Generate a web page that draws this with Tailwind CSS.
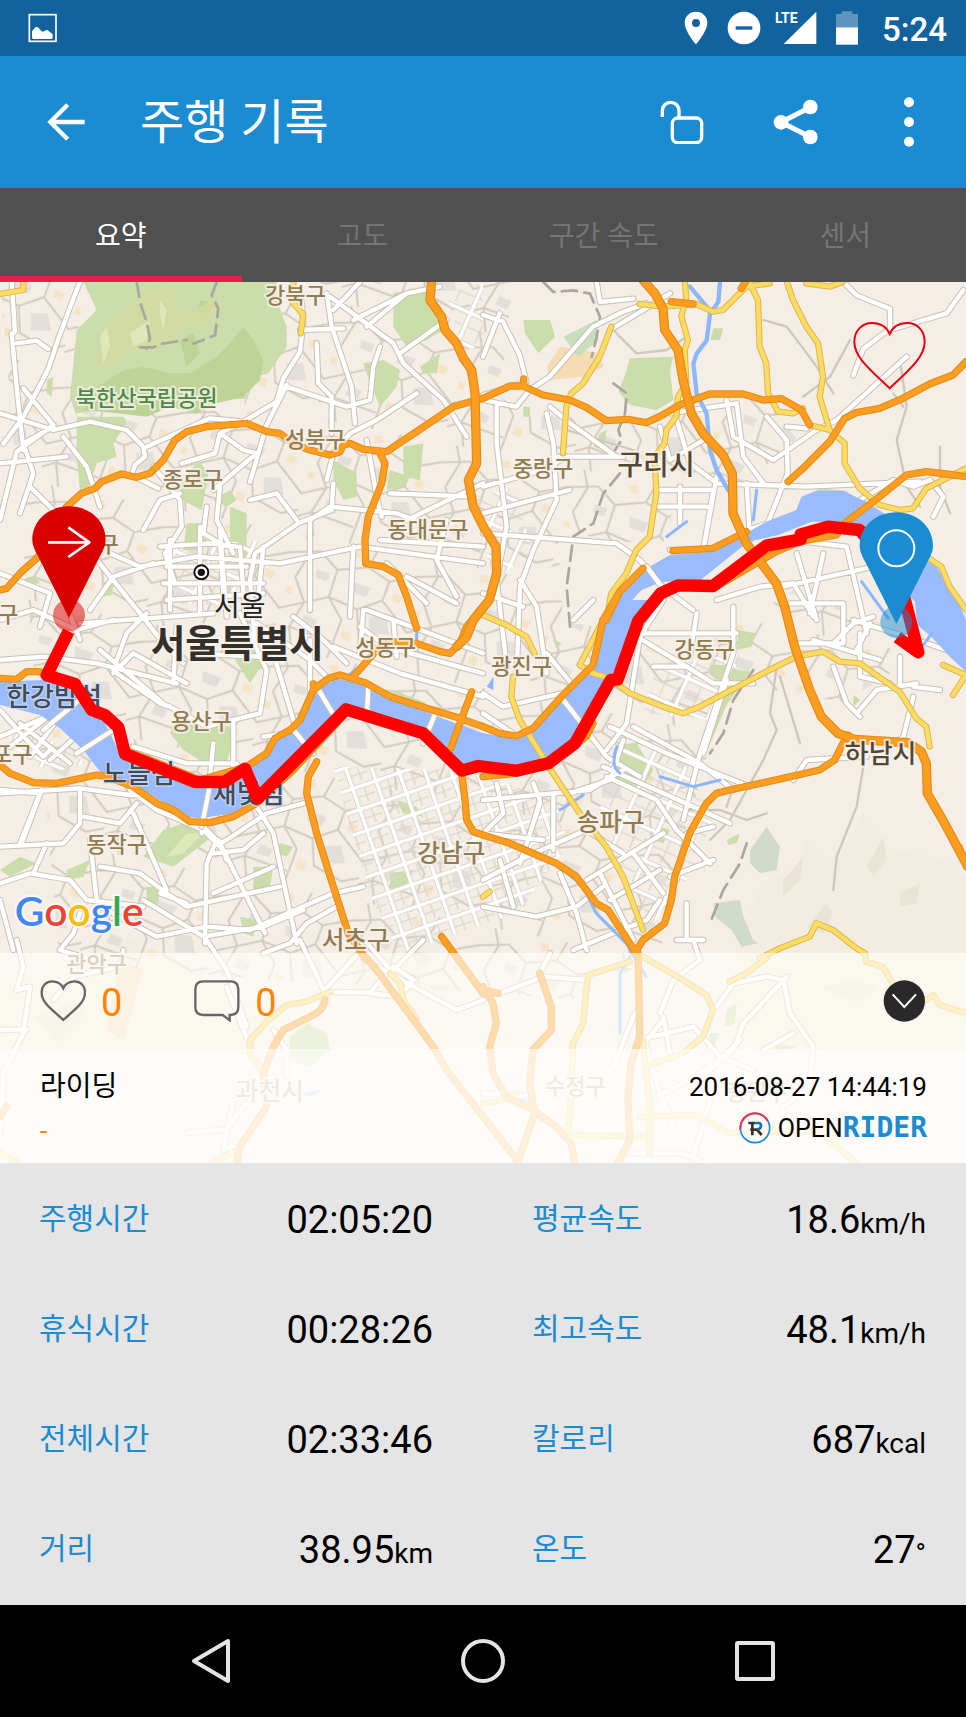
<!DOCTYPE html>
<html lang="ko">
<head>
<meta charset="utf-8">
<meta name="viewport" content="width=device-width, initial-scale=1">
<title>주행 기록</title>
<script src="https://cdn.jsdelivr.net/npm/@tailwindcss/browser@4"></script>
</head>
<body class="min-h-screen flex flex-col bg-black font-['Roboto','Noto_Sans_CJK_KR',sans-serif]">

<!-- Status bar -->
<div class="h-14 bg-[#12629d] flex items-center justify-between pl-7 pr-[19px] text-white">
  <svg class="w-[30px] h-[30px]" viewBox="0 0 90 90" fill="none" aria-hidden="true"><rect x="4" y="5" width="80" height="80" stroke="#fff" stroke-width="5"/><path d="M12 74V55l10-12q5-3 9 1l10 11q4 2 8-1 8-6 14 1l11 9v10q-1 4-5 4H17q-4 0-5-4z" fill="#fff"/></svg>
  <div class="flex items-center">
    <svg class="w-[24px] h-[34px] mr-[19px]" viewBox="0 0 72 102" aria-hidden="true"><path fill="#fff" fill-rule="evenodd" d="M36 2C17 2 2 16 2 35c0 26 34 65 34 65s34-39 34-65C70 16 55 2 36 2zm0 46a12 12 0 110-24 12 12 0 010 24z"/></svg>
    <svg class="w-[34px] h-[34px] mr-[14px]" viewBox="0 0 102 102" aria-hidden="true"><circle cx="51" cy="51" r="49" fill="#fff"/><path d="M26 51h50" stroke="#12629d" stroke-width="10"/></svg>
    <div class="relative w-[42px] h-[34px] mr-[19px]">
      <svg class="w-full h-full" viewBox="0 0 126 102" aria-hidden="true"><path d="M124 2v97H26z" fill="#fff"/></svg>
      <span class="absolute left-0 top-0 text-[14px] leading-none font-bold">LTE</span>
    </div>
    <svg class="w-[22px] h-[34px] mr-[24px]" viewBox="0 0 66 102" aria-hidden="true"><path d="M0 9h17V1h32v8h17v40H0z" fill="#5f94be"/><path d="M0 49h66v52H0z" fill="#fff"/></svg>
    <time class="text-[33px] leading-none font-medium pt-0.5">5:24</time>
  </div>
</div>

<!-- App bar -->
<header class="h-[132px] bg-[#1b8bd2] text-white flex items-center pl-[47px] pr-[47px]">
  <button aria-label="뒤로" class="shrink-0"><svg class="w-[38px] h-[38px]" viewBox="0 0 114 114" fill="none" stroke="#fff" stroke-width="13"><path d="M113 57H12M62 5L10 57l52 52"/></svg></button>
  <h1 class="ml-[55px] pt-0.5 text-[48px] leading-none">주행 기록</h1>
  <div class="ml-auto flex items-center">
    <button aria-label="잠금 해제"><svg class="w-[44px] h-[44px]" viewBox="0 0 132 132" fill="none" stroke="#fff" stroke-width="10"><path d="M7 51V32a25 25 0 0150 0v20"/><rect x="37" y="54" width="88" height="74" rx="16"/></svg></button>
    <button aria-label="공유" class="ml-[69px]"><svg class="w-[46px] h-[46px]" viewBox="0 0 138 138" fill="#fff"><path d="M112 25L24 70l88 44" stroke="#fff" stroke-width="15" fill="none"/><circle cx="112" cy="24" r="22"/><circle cx="24" cy="70" r="22"/><circle cx="112" cy="114" r="22"/></svg></button>
    <button aria-label="더보기" class="ml-[80px]"><svg class="w-[20px] h-[50px]" viewBox="0 0 60 150" fill="#fff"><circle cx="30" cy="16" r="15"/><circle cx="30" cy="75" r="15"/><circle cx="30" cy="134" r="15"/></svg></button>
  </div>
</header>

<!-- Tabs -->
<nav class="h-[94px] bg-[#505050] grid grid-cols-4 text-[28px] leading-none text-[#747474]">
  <button class="text-white border-b-6 border-[#e61f4b] pt-2.5">요약</button>
  <button class="pt-1">고도</button>
  <button class="pt-1">구간 속도</button>
  <button class="pt-1">센서</button>
</nav>

<main class="flex-1 flex flex-col">
<section class="relative h-[881px] overflow-hidden bg-[#f5eee7]">
  <svg class="absolute inset-0 w-full h-full" viewBox="0 846 2898 2643" preserveAspectRatio="xMidYMid slice" role="img" aria-label="주행 경로 지도" stroke-linejoin="round" stroke-linecap="round">
    <defs>
      <pattern id="lanes" width="390" height="350" patternUnits="userSpaceOnUse" patternTransform="rotate(11)"><g fill="none" stroke="#d3ccc1" stroke-width="6"><path d="M0 60L90 40 150 85 240 60 310 90 390 60M40 0L60 50 30 130 70 200 40 280 60 350M150 85L140 170 190 230 170 350M0 230L70 200 140 170 230 190 300 150 390 230M240 60L260 0M230 190L250 270 340 300 390 280M310 90L300 150M0 300L40 280 170 300"/></g><path fill="#e3dfda" d="M90 95l40 5-5 26-36-6zM200 110l60 10-10 30-44-8zM270 205l50-10 20 50-60 10zM80 235l40 10-8 26-40-6z"/><path fill="#f5e4c6" d="M180 20l25-5 8 22-24 4zM10 160l20 2-3 22-18-4zM330 120l30 8-8 22-26-6zM200 260l26 4-4 26-26-6z"/></pattern>
      <pattern id="grid" width="74" height="66" patternUnits="userSpaceOnUse" patternTransform="rotate(-19)"><path d="M0 8H74M8 0V66" fill="none" stroke="#d3ccc1" stroke-width="16"/><path d="M0 8H74M8 0V66" fill="none" stroke="#fff" stroke-width="11"/><path d="M42 16V58M16 38H66" stroke="#ddd6cc" stroke-width="4"/></pattern>
      <pattern id="gridB" width="104" height="92" patternUnits="userSpaceOnUse" patternTransform="rotate(24)"><path d="M0 8H104M8 0V92" fill="none" stroke="#d3ccc1" stroke-width="16"/><path d="M0 8H104M8 0V92" fill="none" stroke="#fff" stroke-width="11"/><path d="M56 16V84M16 50H100" stroke="#ddd6cc" stroke-width="4"/></pattern>

      <g id="streets" fill="none">
        <path d="M35 846l10 150-10 5 15 160 20 190M240 846l-20 50-45 120-30 90-20 40-55 105-60 80M50 1030l60-8 35 25M0 1240l160 50 110-25 110 25 50 50 5 30-30 25-10 30 80 40M70 1165l90 110-110 80L0 1560M0 1390l200-20M160 1280l-90 50 30 90-40 120M90 1460l120 120 210 260 70 90 60 60M190 1310l70 90 40 120M430 1345l200-90 100 10 100-60 20-70 50-80 10-90-5-60M900 990l130-5M980 880l15 100 60 180 10 110M990 890l190 140 30 60 120 110 70 110M1000 930l80-84M1060 960l160-80 100-20M1100 980l120-100M1200 1060l140-100M1250 1180l-120 80-80 40-50 60-20 80M1140 1040l-20 60-10 100-70 20-180-60M860 1155l-60 120-50 170M950 1030l5 120 40 40v110M460 1400l80 100 5 80-50 80 30 90M430 1590l50-90 60-20M750 1500l80-20 60 80M620 1520l-10 80 50 30 10 150M700 1660l-50-100 10-100M1000 1450l-5 80-100 40-130 90-15 80 15 200M1100 1320l30 170 15 60M930 1700v-140l60-40 200 20 80 30M1170 1480l250 10M1200 1570l249-120M1140 1620l309 20M330 1660l90 40 170-30 250 20 240-50 369 50M270 1830l70-100 120-40M0 1720l150 60M150 1780l-30 100M480 1640l150-10 80 10M510 1620v210M600 1580v260M660 1590l20 260M720 1640l15 200M790 1640l-20 200M930 1660v170M1060 1640l-10 210M1160 1690l120 120M1220 1730l150 80M1340 1560l-30 120 60 110M500 1700h240M490 1750h300M500 1800l290-20M660 1300l60-30M545 1390l100-30 15-60 70 50 40 10-60 50-70 60"/>
        <path d="M1449 1070l50-130M1449 945l60 20 50 100 20 80-130 40M1449 1200l100 20 40-50 60-40 130-150 80-40 80-30M1830 990l100-60 80-50M1790 846l10 60 100-10M1490 1220v110l30 250-30 160 30 260M1449 1460l180-50 70-40M1449 1540l260-70M1640 1240l20 90 10 170-70 150-40 110-10 260M1650 1220l60 50 140 100M1660 1370h210M1970 1470h170l-30 180h-100M1970 1520h150M2040 1460v110M2150 1430l-40 220M2030 1260l40 130 80 60 270 10 340-15M1980 1280l30 100 100-60M2010 1240l200-30 20 160 60 80M2180 1200l20 110 120 70 130-90 60-30 210-190M2300 1250l60 70 3 100-60 150-60 20M2360 1280l60 5M2240 1450l10 170M2530 846l40 40 100 40v60l-80 60-30 80M2670 990l170-50 50-70M2580 1500l100-60 60 20 50-20 40 50-30 60M1449 1600l400 30 70 50 80 90 80 60M1560 1740l50 80 30 200M1449 1780l120 40M2150 1800l130-40 100-10 60 100M2370 1810h160v120h-140M2200 1700l170-80 170 20 60 260M2390 1660l60 200M2470 1660l-40 180M2350 1760l270-60M2440 1920l200 60"/>
        <path d="M0 1860l100-30 130 60 110-30M0 1980l130-10 160 20 240 60M200 1820l40 100M240 1870l400-30M340 2010l40-110 60-60M300 1950l190 160M350 2020l130 90 30 10 110 60 160-40 20-130-80-170M530 1880l-10 170M560 2050l-160-90-60 60M580 1960l200 10M770 1870l160 110 60 60M820 1960l60 200 60 100M930 1920v220M1090 1830l-10 130M860 2200l-70 10M880 1850l80 60 80 80M1000 1940l200 80 249 70M1080 1880l80 60 289 80M1100 1830l349 130M1180 1860l10 110M0 2130l90 100 40 40 20-20M30 2240l190-150M90 2270l110-150M0 2210l140-60M150 2280l110-100M60 2170l150 120M0 2380l240-15 150 20 230 10M125 2370l-60 160M0 2370l120 10-60 150M240 2370v100l-50 60-190 10M250 2450l110 20 50-60M390 2370l80 60 140 60 60 60 10 30M640 2230l-10 100-25 170M400 2240l160 50h150l20 40M700 2160v140M600 2470l60 60 20-10 120-80 110-30M650 2520l-30 70-5 240M655 2520l80 160 60 120M770 2420l50 80 70 330M640 2560l90-10 60-50M0 2650l90-30 120 20 50 60 170 20M100 2620l40-90M290 2700l-20-180M300 2600l120 20 80 60 60 40 280-60M400 2440l100 230M480 2680l80 30M430 2700l180 110 180-30 120-50M0 2700l40 150M300 2720l170 90 150-30 130 10 250-110 90-20M640 2680l180-80M180 2850l40-50 20-60M790 2860l80-30 50-60 90-50"/>
        <path d="M1449 2080l60 40 220-50 30 120 60 80 100 60M1449 2140l90 60M1720 1860l60-60M1640 1960l90 110M1660 2140l-70 90M1860 1880l200 120M1920 1900h290M1990 1800l-70 110-40 260-60 80M2090 1840l-20 130M2200 1820v140l-100 300-50 200M1900 2180l200 110 100 80M1830 2180l170 80 250 100M1960 2000h100l80 50h120M2180 2040l-70 220M2380 2340l40-60 180-10M1870 2220l-40 120-120 40M1810 2300l180 80 200 90M1820 2330l150 70 60 90 100 100M1449 2400l320-30 100-60M1490 2350l20 90-60 60M1600 2350l20 50-30 100M1660 2380v170M1449 2500l180 20M1560 2590l60-180M2140 2480l-80 20-30 140M2010 2630l130-50M1449 2640l130-70 180-80 110 70M1449 2720l160 30 120-30 80-60M1500 2580l40 140M1680 2620l50 120 30 110M1720 2850l120-50 100-40 40-60M1800 2620l100 200M1900 2560l90 120M1760 2640l230-140M1830 2700l150-90M2060 2710v100M2030 2820h80M2500 2000l40 110 40 40M2580 1900v130l90 20M2740 2090l-30 120-80 60M2570 2140l60-70 120-20M2560 1860l190 60 90 30M2610 1870l-40 80M2700 1970v80M2740 2060l80 10M2500 1930l60-60 60-20"/>
        <path d="M50 2820l20 80-20 70 40-10-20 140-60 120-10 180M0 3090l80-2M160 3000l60-70 140-30 10-50M180 2850l100 30M620 2820l60 90 60 170M680 2960l50 130 60 130M900 2820l80 170M1000 2976l110 2 60-70-70-80M970 2975l100-110M1130 2900l240 130 80-30M1180 2910l90-90M1110 2980l90 10 40-50-60-40M820 3090l40 60v80M560 3398l120-10 60-80M700 3300l-30 150 30-10"/>
        <path d="M1500 2980l130-50 130 10M1620 2920l30-60M1840 3200l60-150 20-30M1940 3120l50-60M2080 2820l20 60-80 60-40 100M2360 2930l-130 140-30 80-70 60-160 80M2150 3020l50-70 100-20 50 10 20 100 70 100-10 120-80 60M1930 3110l50 170 40 100M1960 3110l120-30 80 90 100 40M2220 3120l-60 60-130 80M1990 3050l20 110M2290 3150l90-50M1449 3280l150 10M1870 3460h180l60 29M2130 3300l-50 170"/>
      </g>

      <g id="yellow" fill="none">
        <path d="M0 882l70-12V846M880 846v14M878 908l32 35-8 57"/>
        <path transform="translate(1449 840)" d="M385 140l-35 90-50 80-35 30-15 40-10 140M470 72l70 8 100-8 50 23 30-5 70-70 70-10M605 0l5 50-15 60 20 70-10 30 5 100-25 40-5 60-30 40-5 40-30 40 5 110-20 130-40 40-30 70-45 60-15 80M800 10l25 50 5 140 20 50 5 90 30 55 45 5 30-15M910 0l20 60 40 80 35 50 15 100-10 60 30 100-60-15M1040 450l45 40v60l45 75 60 50 60 15 40-5 40-60 119-60M970 10l70 10 40-15M1330 830l45 30 25 60 49 70"/>
        <path transform="translate(1449 1800)" d="M0 45l70 30 60 35 25 50M385 20l-35 60-60 115 40 25 50 15 60 45 100 40 60 20 50-20 200-105 90-45 80-15 50 30 60 5 120 85 50 80 30 25 10 60M90 230l-5 60 25 70 50 80 50 80 80 120 80 100 50 90 60 160M830 1075l60-30 90-35 20-40 50 20 70 55 25 15M1380 195l69 30-39 60M1430 740l19 60M0 890l20-15"/>
        <path transform="translate(0 2820)" d="M990 155l-70 30-60 10-60 50-50 55v40l40 60M1170 100l30 30 10 50 40 55M0 640l50 25M640 665l60-30"/>
        <path transform="translate(1449 2820)" d="M740 125l50-25 60-45M1145 40l5 25 50 15 40 70 90 30 20-15 20 30 79 25M480 50l120 70 70 45 20 45-30 80-60 50-115 40M440 65l-125 40-15 145-30 60-5 140-10 130M480 300l20 200v140M0 490l60-10 40-20M470 530l170-5 100 55 260-10 115 95M260 585l240 5"/>
      </g>

      <g id="orange" fill="none">
        <path transform="translate(0 840)" d="M0 930l20-5 40-45 55-50 85-150 45-40 40-15 20-20 60-23 45 10 40-12 40-40 35-60 35-25 60-15 120-10 60 25 40 5 40 30 50 20 60 15 30-10 10-20 20-5 40 18 70 7 90-60 110-75 89-25M1140 520l15 30-10 60-40 100-10 70 2 70 53 10 45 25 25 65 30 95"/>
        <path transform="translate(1449 840)" d="M0 355l80-37h40l60 27 80 15 50 22 60 40 65-4 55 10 40-18 60-35 90-33h100l60 18 55-4 60 34 25 45M122 297v18M565 65l65 7M775 25l15-25M915 605l45-40 80-80 45-70 35-17 70-13 70-30 80-43 70-27 39-40M1449 590l-59-8-60-7-60 10-80 65-105 80-25 35-110 20-70 30-180 105M570 812l120-7 100-50M480 865l-70 70-40 85"/>
        <path transform="translate(0 1800)" d="M1449 380l-69-25-100-30-110-35-70-40-80-25-35 10-45 35-40 90-30 30-45 25-25 45-60 40-140 40-150-60-80-30M0 235l50 3 30-23h40l20 15M0 495l30 25 70 28 70 2 120-25 30 5 80 30 70 50 50 20 50 35 60 3 70-18 70-40 110-100 130-140M940 252v20M950 485l-25 45-5 50 30 120 50 160 45 140 55 80M1415 275l-65 175M1385 520l10 80 5 60 20 35 29 10M1325 1010l124 170M1060 230l70-80 40-25 80 5 70 25 30 5 30-30 20-50 49-60"/>
        <path transform="translate(1449 1800)" d="M395 0l-35 60-15 70-15 65-90 90-90 100-50 23-50-8-50-20M0 530l100-10 100-28 110-82 20-40M0 705l80 25 140 60 60 40 60 80 35 20 85 130M455 1060l25-40 65-50 20-70 10-70 45-130 50-90 30-30 40-10 160-35 110-25 45-30 25-50 15-25"/>
        <path transform="translate(0 2820)" d="M1100 55l30 35 170 230 40 70 109 140 105 135M975 180q-5 30-35 45l-90 45-30 50-30 80 10 100-80 120-10 50M0 530l20-30"/>
        <path transform="translate(1449 2820)" d="M0 140l30 50 10 60-20 70 10 80 40 70 80 40 70 50 45 50 10 60M170 100l35 100v70l-55 60-10 100 15 90-50 145M0 150l45 10M465 40l3 140 2 110-25 80-10 100 5 130-35 70"/>
      </g>
      <g id="express" fill="none">
        <path d="M1295 840l-5 60 35 50 10 40 35 40 20 45 25 35 10 70 5 210-25 50 15 80 30 60 38 60 2 80-22 80-48 60-20 50-30 30"/>
        <path d="M1929 840l35 40 25 45 5 65 40 60 15 90 25 100 35 60 60 65 28 55 2 120 40 90 90 120 25 70 30 120 45 130 35 80 50 50 50 18 160 10 40 27 15 35 3 90 52 90 69 130"/>
      </g>
    </defs>

    <rect y="846" width="2898" height="2643" fill="#f5eee7"/>
    <path fill="#f2ede0" d="M2230 2760l90-140 60 20 40-120 70 60 100-130 80 100 140 20 88 60v859H2300l-80-140 40-180-70-120zM0 2940l260-60 130-60 200 80 300 250-60 339H0zM1000 2850l260-60 120 200-280 30z"/>
    <path fill="#e6e0cd" d="M2350 2640l60-70-10 70-50 50zM2420 2780l60-70 20 30-30 60zM2600 2600l50-90 10 70-40 50zM2700 2680l60-30-10 60-50 10zM2460 2960l110-20 60 30-60 40zM100 3050l120-40 40 30-90 90z" opacity=".7"/>
    <path fill="#f6dcb4" d="M360 2880l70 30-60 210-50-30zM1640 1100l40-60 120 20 10 40-60 30-100 10z"/>

    <path fill="url(#lanes)" d="M0 846H250L210 1240l520-20 110-374h700l-40 340 60 60 340 10 160-40 240-20 90 120-160 140-180-30-60 200-180 0-140-60 20 300 440 60 260-160 340 140v80l-200 120-340-60-170 560-40 260-260 130-640-40-900-60z"/>

    <g fill="#cbddaa">
      <path d="M250 846l40 84-60 60-20 200 20 60 140 0 10 20-40 60 10 40-60 20-30 90-20-10-10-100v-130l200-20 220-20 90-4-5-56 70-20 55-80V980l-30-80V846z"/>
      <path d="M1180 880l90-20 60 130-50 30-60 20-40-60zM1090 1090l60-10 50 30-10 50-50 60-30-70zM1210 1340l60-10-10 110-50-10zM1170 1410l60 20-20 30-50 10zM1000 1380l70 40v70l-40 10-30-60zM535 1460l60-80 30 40-20 110-60-30zM640 1500l50-30 20 30-30 20zM690 1520l50 20v120l-50-30zM560 1570h40v80h-50zM720 1650l40 10-20 50-20-20zM140 1140l20-10-5 60-15-10zM1260 1100l60-40-10 60-40 0zM310 1745l30 10-5 30-25 5zM60 1740l50-10 10 20-40 5z"/>
      <path d="M530 2160l160 20 10 40-20 70-50 10-80-50-40-50zM430 2570l60-80 60-20 80 45-110 85zM0 2610l60-40 50 20-80 40zM200 2610l70-30-20 50-50 10zM440 2660l40 10-10 60-30-20zM760 2600l60 0-10 60-50 20zM840 2530l40 10-20 30-30-10zM1170 2620l70-10-30 70-40-20zM1190 2400l60 20 20 30-60-10zM720 2750l50 10-10 50-30-10zM680 1940l60-20 50 70-40 60zM1050 2060l130 10 100 40-30 10z"/>
      <path d="M1890 1075l130-5-10 40 10 90-50 30-80-15-35-40 20-50zM1570 960l80 0 15 50-50 50-40-60zM2140 985h30l-10 35h-30zM1570 1220h20v30h-20zM1800 1300l20-10-10 60-30-10zM2130 1995l60 0-10 60-50-30zM2190 2005l60 10-70 100-60 140 20-120zM2215 1890l50 10-10 40-45 10zM1850 2240l60-10 50 80-30 50-90-10-10-60zM1980 2480l30 10-20 40-30-10zM2180 2520l40-20-10 30-25 5zM1660 1920l25 10-15 15zM2440 1460l110 15-60 25zM2560 2085l20 15-20 20z"/>
      <path d="M870 3110l50-40 60 30 10 50-60 50-60-20zM2180 3030l30-20-5 60-30 10zM2130 3100l30 0-20 40-15-10zM2320 3130l70 10-60 20z"/>
    </g>
    <path fill="#c8dfbd" d="M1690 1010l100-50 5 60-60 50z"/>
    <path fill="#d0dbcd" d="M2250 2550l50-70 40 60-10 70-50 10-30-30zM2140 2710l80-10 10 50 30 70 15 10-50 10-30-50-50-40z"/>
    <g fill="#bdd496"><path d="M370 1110l60-10 80 20 60 0 80-50 40-40 40-50 30 40 30 60-10 60-50 50-80 20-60 30-80-20-70 30-90-10-100-10 30-60z"/><path d="M540 1020l40-20 20 60-40 40zM600 900l40 10-20 50-30-20z"/></g>
    <path fill="#d3dba1" d="M280 1090l50-120 70-60 40-40 60-24 30 60 40 30 70-40 40 20-60 50-60 20-80 60-90 10-60 50z" opacity=".8"/>
    <path fill="#dfe8b8" d="M300 1010l20-30 10 60-20 50zM390 1000l60-40-10 60-40 20zM480 900l20 30-10 60-10-40zM560 2500l50 0-60 60-50 10z"/>
    <path d="M410 846l10 60 20 60 10 50-10 30M420 1042h40l20-10 80-12M650 846l-15 40 20 40-5 40-5 40-65 25M1630 846l30 30 60-5 50 10 30 70-10 60-15 60M1840 1150l40 30-5 60-20 50 10 30-20 30M1860 1420l-50 60-30 90-60 40-20 150 10 120M2260 2010l-60 90-30 100-40 60M2240 2530l-20 60-50 80-40 100" fill="none" stroke="#a9a79f" stroke-width="8" stroke-dasharray="46 22"/>

    <path fill="url(#grid)" d="M1000 2300l380 10 170 50 130 60 20 120-150 200-350 120-80-150-60-200z"/>
    <path fill="url(#gridB)" d="M1830 2230l200 20 110 200-60 160-120 160-100-140-60-200zM70 2170l190 120-110 30-130-90zM2220 1960l-70 200-220-20 40-140z"/>
    <path fill="url(#gridB)" d="M1340 880l109-30v180l-60 30zM1420 1500l120-40 60 200-120 80zM500 1640l280-20-20 200-240-10z"/>

    <g fill="none" stroke="#cfc8bc" stroke-width="7"><path d="M1840 990l70 70 90-10 60-40M2290 960l70 20 90 120 50 80M2700 1080l20 140-30 100 30 140 40 60M2330 2000l-20 140 20 50-40 90-100 180-60 60M2340 2030l60 200M2590 2300l-20 120-60 150-10 100M2060 2430l100 0 80 30 60-20M2410 1190l80-60 60-110M2820 1340v120l30 80M2680 1180l30 40M2180 2420l20-60M1700 1290l200 60"/></g>
    <use href="#streets" stroke="#c9c1b4" stroke-width="19"/>
    <use href="#streets" stroke="#fff" stroke-width="13"/>

    <!-- Rivers and streams -->
    <g fill="#9abcfe">
      <path transform="translate(0 1800)" d="M0 245l130-5 90 10 80 90 50 100 130 50 120 70 80-10 60-50 60-30 30-50 65-45 55-105 60-35 90 25 200 85 149 55v100l-64 10-115-110-230-70-270 270-70 40-100 15-40-5-130-80-130-55-50-65-70-65-60-40-120-30z"/>
      <path transform="translate(1449 1800)" d="M-3 398q83 22 133-3l120-115 80-80 20-80 30-90 20-30h140l-70 60-70 180-130 190-70 60-100 20-103-20z"/>
      <path transform="translate(1449 840)" d="M345 1020l35-35 60-70 60-55 60-35 130-10 80-45 80-45 90-35 15-40 45-18h80l70 33 60 40 90 95 50 40 35 60 45 75 19 45v155l-44-40-60-65-42-35-7-70-20-20-25-10 5-20-70-80-110-110h-90l-100 40-90 20-150 120h-110l-60 25-70 75z"/>
    </g>
    <path d="M2160 846l-5 60-25 35-10 80-30 40-10 30 10 90 30 60 10 110 20 60 35 60M2070 860l50 60" fill="none" stroke="#8db7fb" stroke-width="13"/>
    <path d="M2585 1745l80 110M1449 2500l120 40 100 50 80 70 40 80 90 90 60 100M1680 2430l70-45M1850 2240q-20 60 10 80M1980 2330l100 30 80-20M2270 1470l-10 90M1860 3100V2920l30-50M1250 1870v50M1080 2000l-40 30M2000 1610l60-45M2770 1935l25-35" fill="none" stroke="#8db7fb" stroke-width="9"/>
    <path fill="#8db7fb" d="M1549 3290l30 10 30 30-60-15zM900 3280l70-10-40 20zM1460 2060l20-30v40z"/>

    <!-- Bridges -->
    <g fill="none" stroke="#cbc3b6" stroke-width="19"><path d="M130 2190l120-100M230 2260l110-70M635 2330l-30 150M950 2060l60 100M1105 2060l-5 100M1310 2130l-40 100M880 2190l60 70M1690 2100l70 90M1940 1700l60 80"/></g>
    <g fill="none" stroke="#fff" stroke-width="13"><path d="M130 2190l120-100M230 2260l110-70M635 2330l-30 150M950 2060l60 100M1105 2060l-5 100M1310 2130l-40 100M880 2190l60 70M1690 2100l70 90M1940 1700l60 80"/></g>

    <use href="#yellow" stroke="#dcb64e" stroke-width="19"/>
    <use href="#yellow" stroke="#fedb62" stroke-width="13"/>
    <use href="#orange" stroke="#e08d15" stroke-width="22"/>
    <use href="#orange" stroke="#fc9d21" stroke-width="16"/>
    <use href="#express" stroke="#e08d15" stroke-width="28"/>
    <use href="#express" stroke="#fc9d21" stroke-width="21"/>

    <!-- Place names -->
    <g font-family="'Noto Sans CJK KR', sans-serif" font-size="66" font-weight="500" fill="#8f7c52" text-anchor="middle" stroke="#f8f2ec" stroke-width="12" stroke-opacity=".8" paint-order="stroke">
      <text x="886" y="909">강북구</text>
      <text x="440" y="1218" fill="#4d8a44">북한산국립공원</text>
      <text x="946" y="1341">성북구</text>
      <text x="579" y="1461">종로구</text>
      <text x="1284" y="1611">동대문구</text>
      <text x="1629" y="1427">중랑구</text>
      <text x="265" y="1657">은평구</text>
      <text x="-36" y="1866">마포구</text>
      <text x="1157" y="1964">성동구</text>
      <text x="1565" y="2022">광진구</text>
      <text x="2114" y="1971">강동구</text>
      <text x="604" y="2188">용산구</text>
      <text x="-24" y="2286">영등포구</text>
      <text x="350" y="2556">동작구</text>
      <text x="290" y="2917">관악구</text>
      <text x="1726" y="3282">수정구</text>
      <text x="2270" y="3300">중원구</text>
      <g font-size="74">
        <text x="1354" y="2587">강남구</text>
        <text x="1832" y="2494">송파구</text>
        <text x="1067" y="2848">서초구</text>
        <text x="810" y="3300">과천시</text>
      </g>
      <g fill="#524834">
        <text x="1968" y="1424" font-size="84">구리시</text>
        <text x="2642" y="2290" font-size="78">하남시</text>
        <text x="712" y="1970" font-size="113" fill="#33302a" font-weight="700">서울특별시</text>
      </g>
      <g fill="#434b50" font-size="78" stroke="#c9dafa" stroke-width="8">
        <text x="162" y="2118">한강밤섬</text>
        <text x="417" y="2348">노들섬</text>
        <text x="746" y="2408">새빛섬</text>
      </g>
      <text x="719" y="1847" font-size="84" font-weight="400" fill="#222">서울</text>
    </g>
    <circle cx="604" cy="1717" r="21" fill="#fff" stroke="#111" stroke-width="6"/><circle cx="604" cy="1717" r="11" fill="#111"/>

    <!-- Recorded route -->
    <circle cx="207" cy="1846" r="48" fill="#d90000" opacity=".5"/>
    <path d="M206 1894L140 2026 225 2052 275 2130 315 2145 355 2182 375 2262 585 2346 673 2346 735 2306 773 2395 1038 2128 1270 2200 1385 2312 1435 2298 1549 2312 1645 2290 1725 2230 1832 2040 1853 2038 1915 1862 1982 1780 2034 1756 2139 1758 2299 1637 2402 1618 2402 1603 2484 1580 2579 1590 2640 1660 2715 1800 2755 1957 2692 1912" fill="none" stroke="#f00" stroke-width="37" stroke-linecap="butt"/>
    <circle cx="2689" cy="1866" r="48" fill="#1b8bd2" opacity=".5"/>
    <path d="M207 1854L115 1670Q97 1640 97 1620C97 1560 147 1519 207 1519s110 41 110 101q0 20-18 50z" fill="#d90000"/>
    <g fill="none" stroke="#fff" stroke-width="8" stroke-linecap="butt"><path d="M144 1627h122M205 1582l63 45-63 44"/></g>
    <path d="M2689 1872L2597 1688Q2579 1658 2579 1638C2579 1578 2629 1537 2689 1537s110 41 110 101q0 20-18 50z" fill="#1b8bd2"/>
    <circle cx="2689" cy="1645" r="54" fill="none" stroke="#fff" stroke-width="6"/>

    <!-- Map provider mark -->
    <text x="44" y="2777" font-family="Lato, sans-serif" font-size="122" font-weight="600" stroke="#fff" stroke-width="12" stroke-opacity=".7" paint-order="stroke"><tspan fill="#4285f4">G</tspan><tspan fill="#ea4335">o</tspan><tspan fill="#fbbc05">o</tspan><tspan fill="#4285f4">g</tspan><tspan fill="#34a853">l</tspan><tspan fill="#ea4335">e</tspan></text>
  </svg>

  <button aria-label="즐겨찾기" class="absolute right-[40px] top-[39px]"><svg class="w-[73px] h-[70px]" viewBox="0 0 219 210" fill="none" stroke="#e60012" stroke-width="6"><path d="M110 202C50 145 4 108 4 63 4 28 28 6 57 6c25 0 44 12 53 33 9-21 28-33 53-33 29 0 52 22 52 57 0 45-45 82-105 139z"/></svg></button>

  <div class="absolute inset-x-0 bottom-0">
    <div class="h-24 bg-[#fffdf9]/65 flex items-center px-10 text-[38px] leading-none text-[#ff8400]">
      <button class="flex items-center" aria-label="좋아요 0"><svg class="w-[46px] h-[42px]" viewBox="0 0 138 126" fill="none" stroke="#666" stroke-width="7"><path d="M70 120C32 85 5 67 5 38 5 16 20 4 36 4c16 0 28 7 34 21 6-14 18-21 34-21 16 0 31 12 31 34 0 29-27 47-65 82z"/></svg><span class="ml-[15px] pt-1">0</span></button>
      <button class="ml-[72px] flex items-center" aria-label="댓글 0"><svg class="w-[46px] h-[42px]" viewBox="0 0 138 126" fill="none" stroke="#666" stroke-width="7"><path d="M28 4h81q24 0 24 24v54q0 23-24 23h-2v16L86 105H28Q4 105 4 82V28Q4 4 28 4z"/></svg><span class="ml-[15px] pt-1">0</span></button>
      <button class="ml-auto" aria-label="접기"><svg class="w-[43px] h-[42px]" viewBox="0 0 129 126"><circle cx="64" cy="63" r="62" fill="#292929"/><path d="M29 43l35 38 35-38" fill="none" stroke="#fff" stroke-width="6"/></svg></button>
    </div>
    <div class="h-[114px] bg-[#fffefc]/85 flex justify-between pl-10 pr-[39px] pt-[23px]">
      <div>
        <p class="text-[28px] leading-[30px]">라이딩</p>
        <p class="text-[26px] leading-[30px] mt-[14px] text-[#ff8400]">-</p>
      </div>
      <div class="flex flex-col items-end">
        <time class="text-[26px] leading-[30px]">2016-08-27 14:44:19</time>
        <div class="mt-[10px] flex items-center h-[32px] leading-none">
          <svg class="w-[32px] h-[32px] mr-[7px]" viewBox="0 0 96 96" fill="none"><circle cx="48" cy="48" r="44" stroke="#1b8bd2" stroke-width="5"/><path d="M4 52A44 44 0 0186 26" stroke="#f0325a" stroke-width="6"/><path d="M28 33h20M40 30v40" stroke="#333" stroke-width="8"/><path d="M34 53h20l14 16" stroke="#333" stroke-width="8"/><path d="M46 33h12q8 0 8 8 0 9-10 11" stroke="#1b6fa8" stroke-width="8"/></svg>
          <span class="text-[25px]">OPEN</span><span class="text-[28px] font-extrabold font-['DejaVu_Sans_Mono'] text-[#1b8bd2]">RIDER</span>
        </div>
      </div>
    </div>
  </div>
</section>

<!-- Ride statistics -->
<dl class="flex-1 bg-[#e5e5e5] pl-[39px] pr-10 grid grid-cols-2 auto-rows-[110px] gap-x-[99px] text-[38px] text-black [&_dt]:text-[30px] [&_dt]:pt-[2px] [&_dt]:text-[#1b8bd2] [&_dt]:leading-none [&_dd]:leading-none [&_small]:text-[28px]">
  <div class="flex items-center justify-between"><dt>주행시간</dt><dd class="pt-1">02:05:20</dd></div>
  <div class="flex items-center justify-between"><dt>평균속도</dt><dd class="pt-1">18.6<small>km/h</small></dd></div>
  <div class="flex items-center justify-between"><dt>휴식시간</dt><dd class="pt-1">00:28:26</dd></div>
  <div class="flex items-center justify-between"><dt>최고속도</dt><dd class="pt-1">48.1<small>km/h</small></dd></div>
  <div class="flex items-center justify-between"><dt>전체시간</dt><dd class="pt-1">02:33:46</dd></div>
  <div class="flex items-center justify-between"><dt>칼로리</dt><dd class="pt-1">687<small>kcal</small></dd></div>
  <div class="flex items-center justify-between"><dt>거리</dt><dd class="pt-1">38.95<small>km</small></dd></div>
  <div class="flex items-center justify-between"><dt>온도</dt><dd class="pt-1">27<small>°</small></dd></div>
</dl>
</main>

<!-- System navigation -->
<nav class="h-28 bg-black grid grid-cols-3 px-[75px]">
  <button aria-label="뒤로" class="flex items-center justify-center"><svg class="w-[46px] h-[46px]" viewBox="0 0 46 46" fill="none" stroke="#e4e4e4" stroke-width="4" stroke-linejoin="round"><path d="M40 3v40L6 23z"/></svg></button>
  <button aria-label="홈" class="flex items-center justify-center"><svg class="w-[46px] h-[46px]" viewBox="0 0 46 46" fill="none" stroke="#e4e4e4" stroke-width="4"><circle cx="23" cy="23" r="20"/></svg></button>
  <button aria-label="최근 앱" class="flex items-center justify-center"><svg class="w-[46px] h-[46px]" viewBox="0 0 46 46" fill="none" stroke="#e4e4e4" stroke-width="4"><rect x="5" y="5" width="36" height="36" rx="1"/></svg></button>
</nav>
</body>
</html>
